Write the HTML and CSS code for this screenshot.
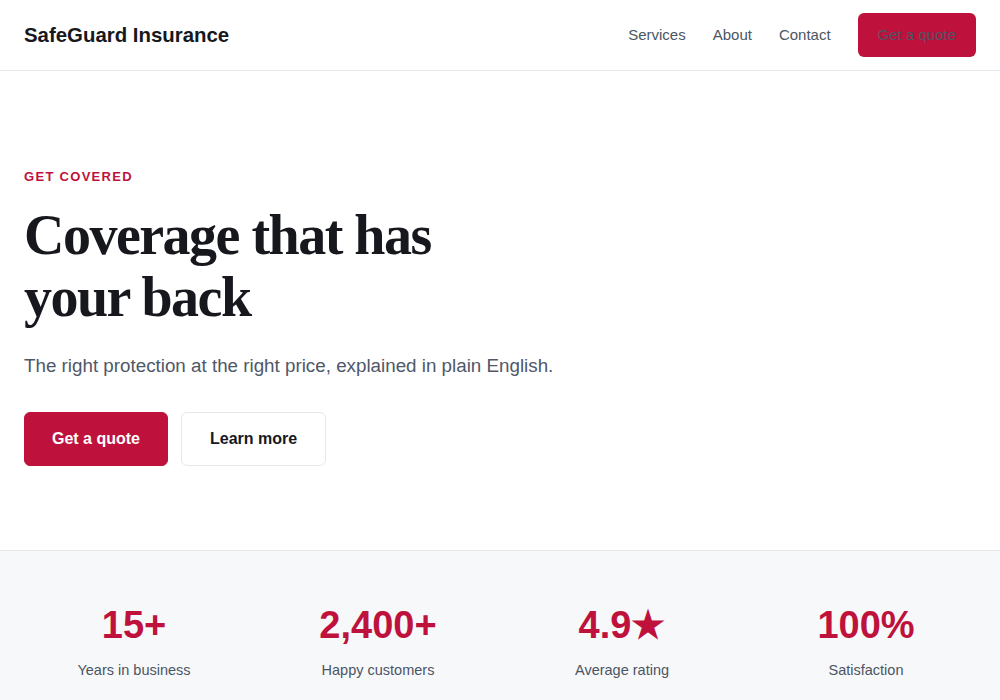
FILE: index.html
```html
<!DOCTYPE html>
<html lang="en">
  <head>
    <meta charset="UTF-8" />
    <meta name="viewport" content="width=device-width, initial-scale=1.0" />
    <title>SafeGuard Insurance</title>
    <link rel="stylesheet" href="styles.css">
  </head>
  <body>
    <header class="site-header">
      <div class="logo">SafeGuard Insurance</div>
      <nav class="nav">
        <a href="#">Services</a>
        <a href="#">About</a>
        <a href="#">Contact</a>
        <a href="#" class="nav-cta">Get a quote</a>
      </nav>
    </header>

    <section class="hero">
      <p class="eyebrow">GET COVERED</p>
      <h1>Coverage that has<br>your back</h1>
      <p class="lead">The right protection at the right price, explained in plain English.</p>
      <div class="actions">
        <button class="btn btn-primary">Get a quote</button>
        <button class="btn btn-secondary">Learn more</button>
      </div>
    </section>

    <section class="stats">
      <div class="stat">
        <div class="stat-value">15+</div>
        <div class="stat-label">Years in business</div>
      </div>
      <div class="stat">
        <div class="stat-value">2,400+</div>
        <div class="stat-label">Happy customers</div>
      </div>
      <div class="stat">
        <div class="stat-value">4.9★</div>
        <div class="stat-label">Average rating</div>
      </div>
      <div class="stat">
        <div class="stat-value">100%</div>
        <div class="stat-label">Satisfaction</div>
      </div>
    </section>
  </body>
</html>
```

FILE: styles.css
```css
body {
  margin: 0;
  background-color: #fff;
  font-family: "Liberation Sans", Arial, sans-serif;
  color: #16181d;
}
.site-header {
  display: flex;
  justify-content: space-between;
  align-items: center;
  height: 70px;
  padding: 0 24px;
  border-bottom: 1px solid #e5e7eb;
}
.logo {
  font-size: 20.4px;
  font-weight: bold;
  color: #16181d;
}
.nav {
  display: flex;
  align-items: center;
  gap: 27px;
}
.nav a {
  color: #4b5563;
  text-decoration: none;
  font-size: 15px;
  line-height: 20px;
}
.nav .nav-cta {
  background-color: #be123c;
  padding: 12px 20px;
  border-radius: 6px;
}
.hero {
  padding: 96px 24px 84px;
}
.eyebrow {
  margin: 0;
  color: #be123c;
  font-size: 13px;
  line-height: 20px;
  font-weight: bold;
  letter-spacing: 1.3px;
}
.hero h1 {
  margin: 18px 0 0;
  font-family: "Liberation Serif", "Times New Roman", serif;
  font-size: 56px;
  line-height: 1.1;
  letter-spacing: -0.027em;
  color: #16181d;
}
.lead {
  margin: 23px 0 0;
  font-size: 18.8px;
  line-height: 1.6;
  color: #4f5868;
}
.actions {
  display: flex;
  gap: 13px;
  margin-top: 31px;
}
.btn {
  font-family: "Liberation Sans", Arial, sans-serif;
  font-size: 16px;
  font-weight: bold;
  line-height: 20px;
  padding: 16px 27px;
  border-radius: 6px;
  cursor: pointer;
}
.btn-primary {
  background-color: #be123c;
  color: #fff;
  border: 1px solid #be123c;
}
.btn-secondary {
  padding: 16px 28px;
  background-color: #fff;
  color: #16181d;
  border: 1px solid #e5e7eb;
}
.stats {
  display: grid;
  grid-template-columns: repeat(4, 1fr);
  gap: 24px;
  padding: 50px 24px 48px;
  background-color: #f7f8fa;
  border-top: 1px solid #e5e7eb;
  text-align: center;
}
.stat-value {
  font-size: 38px;
  line-height: 48px;
  font-weight: bold;
  color: #be123c;
}
.stat-label {
  margin-top: 10px;
  font-size: 14.5px;
  line-height: 22px;
  color: #4b5563;
}
```
